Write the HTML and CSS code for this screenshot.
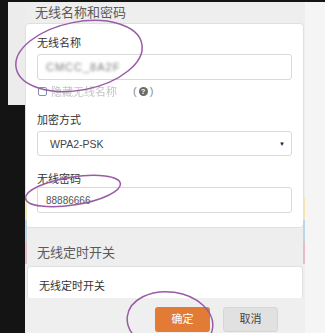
FILE: index.html
```html
<!DOCTYPE html>
<html lang="zh-CN">
<head>
<meta charset="utf-8">
<title>无线设置</title>
<link rel="stylesheet" href="styles.css">
</head>
<body>
<div class="screen">
  <div class="leftcol"><div class="leftcol-top"></div></div>
  <div class="main">
    <div class="sec-title">无线名称和密码</div>
    <div class="card card-first">
      <div class="label">无线名称</div>
      <div class="field"><span class="blurred">CMCC_8A2F</span></div>
      <div class="check-row">
        <span class="checkbox"></span>
        <span class="check-text">隐藏无线名称</span>
        <span class="help">(<span class="help-icon">?</span>)</span>
      </div>
      <div class="label label-gap">加密方式</div>
      <div class="field select"><span class="select-text">WPA2-PSK</span><span class="caret">▼</span></div>
      <div class="label label-gap2">无线密码</div>
      <div class="field field-pwd"><span class="pwd">88886666</span></div>
    </div>
    <div class="sec-title sec-title-2">无线定时开关</div>
    <div class="card card-second">
      <div class="label">无线定时开关</div>
    </div>
    <div class="footer">
      <div class="btn btn-ok">确定</div>
      <div class="btn btn-cancel">取消</div>
    </div>
    <div class="stripe stripe-left"><i class="s-y"></i><i class="s-b"></i><i class="s-p"></i></div>
    <div class="stripe stripe-right"><i class="s-y"></i><i class="s-b"></i><i class="s-p"></i></div>
  </div>
  <div class="rightcol"></div>
  <svg class="marks" width="325" height="333" viewBox="0 0 325 333">
    <ellipse cx="79" cy="56" rx="64" ry="34" transform="rotate(-11 79 56)"/>
    <ellipse cx="73" cy="191" rx="48" ry="14" transform="rotate(-9 73 191)"/>
    <ellipse cx="170" cy="322" rx="43" ry="30" transform="rotate(8 170 322)"/>
  </svg>
</div>
</body>
</html>
```

FILE: styles.css
```css
* { box-sizing: border-box; }
html, body { margin: 0; padding: 0; }
body {
  width: 325px;
  height: 333px;
  overflow: hidden;
  background: #141414;
  font-family: "Liberation Sans", "Noto Sans CJK SC", sans-serif;
}
.screen {
  position: relative;
  display: flex;
  padding-top: 2px;
  height: 333px;
}
.leftcol { width: 25px; flex: none; }
.leftcol-top { margin-left: 8px; height: 103px; background: #ececec; }
.main {
  position: relative;
  width: 280px;
  flex: none;
  background: #eeeeee;
  display: flex;
  flex-direction: column;
}
.rightcol { width: 20px; flex: none; background: #f5f5f5; }
.sec-title {
  height: 21px;
  line-height: 21px;
  padding-left: 10px;
  font-size: 13px;
  color: #5a5a5a;
}
.sec-title-2 {
  height: 38px;
  line-height: 14px;
  padding-top: 18px;
  padding-left: 12px;
}
.card {
  background: #fff;
  border: 1px solid #e0e0e0;
  border-radius: 4px;
}
.card-first {
  margin-right: 1px;
  padding: 12px 11px 14px 11px;
}
.card-second {
  margin: 0 2px;
  height: 32px;
  padding: 12px 11px 0 11px;
  border-bottom: none;
  border-radius: 4px 4px 0 0;
}
.label {
  font-size: 11px;
  line-height: 14px;
  color: #333;
  margin-bottom: 4px;
}
.label-gap { margin-top: 15px; }
.label-gap2 { margin-top: 16px; margin-bottom: 1px; }
.field {
  height: 26px;
  border: 1px solid #d9d9d9;
  border-radius: 3px;
  display: flex;
  align-items: center;
  padding-left: 8px;
}
.blurred {
  font-size: 11px;
  color: #7a7a7a;
  filter: blur(1.4px);
  letter-spacing: 1px;
}
.check-row {
  margin-top: 4px;
  height: 14px;
  display: flex;
  align-items: center;
  padding-left: 1px;
}
.checkbox {
  width: 9px;
  height: 9px;
  border: 1.5px solid #7f90b5;
  border-radius: 2px;
  margin-right: 4px;
}
.check-text {
  font-size: 11px;
  color: #c4c4c4;
  filter: blur(0.4px);
}
.help {
  margin-left: 16px;
  font-size: 11px;
  color: #8a8a8a;
  display: flex;
  align-items: center;
}
.help-icon {
  display: inline-block;
  width: 9px;
  height: 9px;
  border-radius: 50%;
  background: #6a6a6a;
  color: #fff;
  font-size: 7px;
  line-height: 9px;
  text-align: center;
  font-weight: bold;
  margin: 0 2px;
}
.select {
  height: 25px;
  padding-left: 12px;
  padding-right: 6px;
  justify-content: space-between;
}
.select-text { font-size: 10.5px; color: #444; }
.caret { font-size: 6px; color: #222; }
.pwd { font-size: 10px; color: #555; }
.footer {
  flex: 1;
  background: #efefef;
  display: flex;
  justify-content: flex-end;
  align-items: flex-start;
  padding-top: 9px;
  padding-right: 27px;
  gap: 13px;
}
.btn {
  width: 55px;
  height: 25px;
  border-radius: 3px;
  font-size: 11px;
  line-height: 25px;
  text-align: center;
}
.btn-ok { background: #e27b36; color: #fff; }
.btn-cancel { background: #e1e1e1; color: #444; border: 1px solid #d6d6d6; line-height: 23px; }
.stripe {
  position: absolute;
  top: 196px;
  width: 2px;
  display: flex;
  flex-direction: column;
}
.stripe-left { left: 0; }
.stripe-right { right: 0; }
.stripe i { display: block; width: 2px; }
.s-y { height: 22px; background: #f2e6b2; }
.s-b { height: 22px; background: #b9d7e7; }
.s-p { height: 22px; background: #e6bccb; }
.marks {
  position: absolute;
  left: 0;
  top: 0;
  pointer-events: none;
}
.marks ellipse {
  fill: none;
  stroke: #9a5ba6;
  stroke-width: 1.5;
}
```
